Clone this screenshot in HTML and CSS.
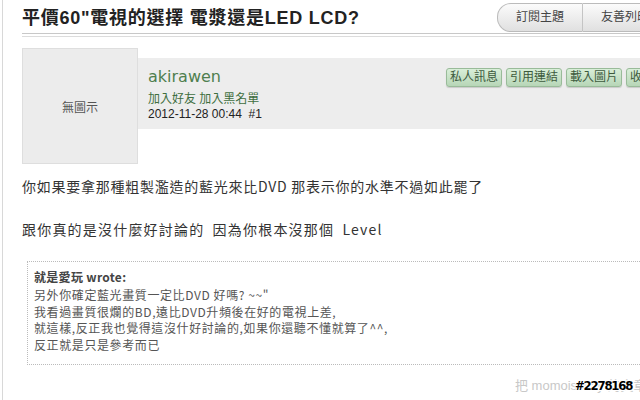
FILE: index.html
```html
<!DOCTYPE html>
<html lang="zh-Hant">
<head>
  <meta charset="UTF-8" />
  <meta name="viewport" content="width=device-width, initial-scale=1.0" />
  <title>平價60"電視的選擇 電漿還是LED LCD?</title>
  <link rel="stylesheet" href="styles.css">
</head>
<body>
  <div class="page">
    <div class="topic-head">
      <h1>平價60"電視的選擇 電漿還是LED LCD?</h1>
      <div class="topic-tools">
        <a class="tool first">訂閱主題</a>
        <a class="tool">友善列印</a>
      </div>
    </div>

    <div class="post">
      <div class="post-top">
        <div class="avatar">無圖示</div>
        <div class="post-info">
          <div class="author">
            <div class="name">akirawen</div>
            <div class="links"><a>加入好友</a> <a>加入黑名單</a></div>
            <div class="date">2012-11-28 00:44 &nbsp;#1</div>
          </div>
          <div class="actions">
            <a class="btn">私人訊息</a>
            <a class="btn">引用連結</a>
            <a class="btn">載入圖片</a>
            <a class="btn">收藏文章</a>
          </div>
        </div>
      </div>

      <div class="post-body">
        <p class="first-line">你如果要拿那種粗製濫造的藍光來比DVD 那表示你的水準不過如此罷了</p>
        <p class="second-line">跟你真的是沒什麼好討論的&ensp;因為你根本沒那個&ensp;Level</p>

        <div class="quote">
          <strong>就是愛玩 wrote:</strong>
          <div>另外你確定藍光畫質一定比DVD 好嗎? ~~"</div>
          <div>我看過畫質很爛的BD,遠比DVD升頻後在好的電視上差,</div>
          <div>就這樣,反正我也覺得這沒什好討論的,如果你還聽不懂就算了^^,</div>
          <div>反正就是只是參考而已</div>
        </div>
      </div>

      <div class="post-foot">
        <span class="share">把 momoisssay 的文章</span>
        <span class="post-id">#2278168</span>
      </div>
    </div>
  </div>
</body>
</html>
```

FILE: styles.css
```css
body {
  margin: 0;
  overflow: hidden;
  background: #fff;
  font-family: "Liberation Sans", "Noto Sans CJK TC", sans-serif;
  color: #333;
}
a {
  text-decoration: none;
  cursor: pointer;
}
.page {
  width: 720px;
  height: 400px;
  margin-left: 2px;
  border-left: 1px solid #d8d8d8;
  padding-left: 19px;
}
.topic-head {
  display: flex;
  justify-content: space-between;
  align-items: flex-start;
  height: 33px;
  border-bottom: 1px solid #c8c8c8;
  position: relative;
}
.topic-head::after {
  content: "";
  position: absolute;
  left: 0;
  right: 0;
  bottom: -4px;
  border-bottom: 1px solid #dcdcdc;
}
h1 {
  margin: 0;
  padding-top: 7px;
  font-size: 18px;
  line-height: 22px;
  font-weight: bold;
  color: #222;
  letter-spacing: 0.75px;
}
.topic-tools {
  display: flex;
  margin-top: 3px;
  margin-right: 74px;
}
.tool {
  display: block;
  width: 84px;
  height: 27px;
  line-height: 27px;
  text-align: center;
  font-size: 12px;
  color: #444;
  border: 1px solid #bbb;
  background: linear-gradient(#fbfbfb, #e0e0e0);
}
.tool.first {
  border-radius: 14px 0 0 14px;
  border-right: 1px solid #c4c4c4;
}
.tool + .tool {
  border-left: none;
}

.post-top {
  display: flex;
  margin-top: 14px;
}
.avatar {
  width: 116px;
  height: 116px;
  flex: none;
  background: #ececec;
  border: 1px solid #dedede;
  box-sizing: border-box;
  display: flex;
  align-items: center;
  justify-content: center;
  font-size: 12px;
  color: #555;
}
.post-info {
  flex: 1;
  display: flex;
  justify-content: space-between;
  margin-top: 10px;
  height: 71px;
  background: #ededed;
  padding-left: 10px;
}
.author {
  padding-top: 9px;
}
.name {
  font-family: "DejaVu Sans", sans-serif;
  font-size: 16px;
  color: #4f7f4f;
  line-height: 20px;
}
.links {
  margin-top: 5px;
  font-size: 12px;
  line-height: 15px;
  color: #3f6f3f;
}
.links a {
  color: #3f6f3f;
}
.date {
  font-size: 12px;
  line-height: 15px;
  color: #222;
}
.actions {
  display: flex;
  gap: 4px;
  padding-top: 10px;
  margin-right: 60px;
}
.btn {
  display: block;
  height: 17px;
  line-height: 17px;
  padding: 0 3px;
  font-size: 12px;
  color: #3d5a3d;
  border: 1px solid #99bb99;
  border-radius: 3px;
  background: linear-gradient(#d8eed8, #b7d6b7);
  box-shadow: 0 1px 1px rgba(0, 0, 0, 0.15);
}

.post-body {
  padding-top: 11px;
  font-family: "Noto Sans CJK TC", sans-serif;
}
.post-body p {
  margin: 0 0 20px;
  font-size: 14px;
  line-height: 23px;
  color: #333;
  letter-spacing: 0.5px;
}
.post-body p.first-line {
  letter-spacing: 0.75px;
}
.post-body p.second-line {
  letter-spacing: 1.2px;
}
.quote {
  margin: 18px 0 0 5px;
  padding: 7px 6px 10px;
  border: 1px dotted #bbb;
  font-size: 12px;
  line-height: 16.8px;
  color: #555;
  letter-spacing: 0.6px;
}
.quote strong {
  display: block;
  margin-bottom: 1px;
  color: #444;
  letter-spacing: 0.3px;
}
.post-foot {
  position: relative;
  display: flex;
  justify-content: flex-start;
  margin-top: 10px;
  padding-left: 493px;
}
.share {
  font-family: "Liberation Sans", "Noto Sans CJK TC", sans-serif;
  font-size: 13px;
  color: #c8c8c8;
}
.post-id {
  position: absolute;
  left: 553px;
  top: 3px;
  font-family: "DejaVu Sans Condensed", "DejaVu Sans", sans-serif;
  font-weight: bold;
  font-size: 13px;
  letter-spacing: -1.2px;
  color: #000;
  text-shadow: 1px 0 #fff, -1px 0 #fff, 0 1px #fff, 0 -1px #fff,
    1px 1px #fff, -1px -1px #fff, 1px -1px #fff, -1px 1px #fff;
}
```
